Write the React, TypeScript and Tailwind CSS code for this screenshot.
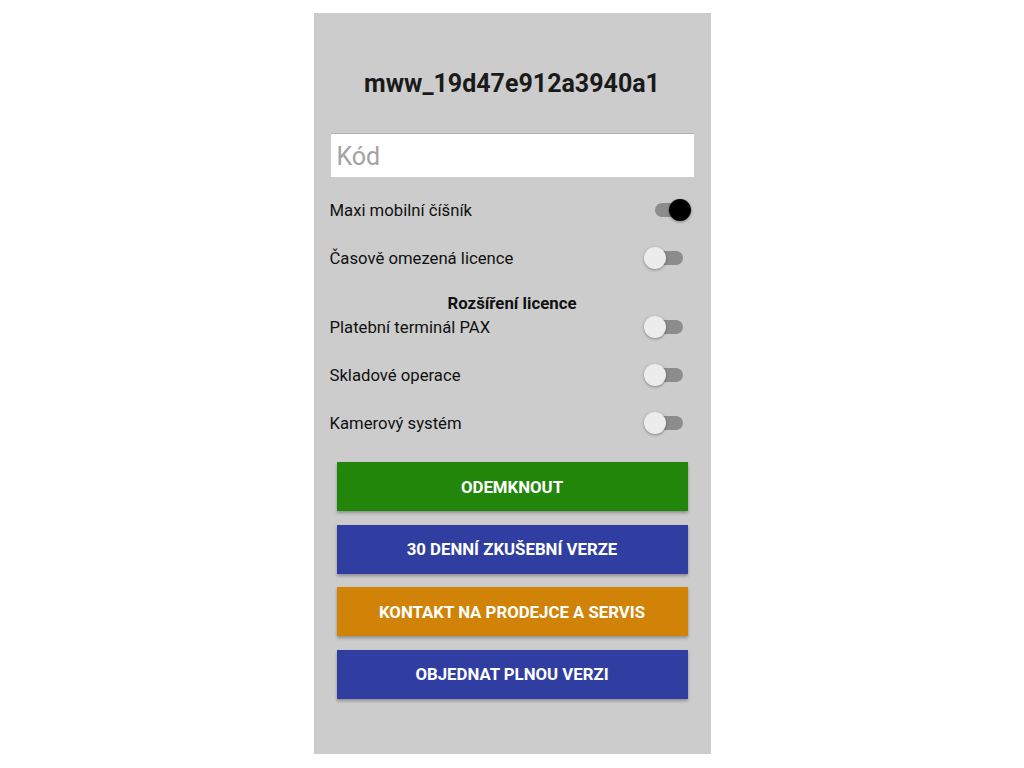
import React from "react";

const Toggle = ({ on }: { on?: boolean }) => (
  <div className="relative h-[22px] w-[48px] shrink-0">
    <div className="absolute left-[11px] right-[9px] top-[4px] h-[14px] rounded-full bg-[#8c8c8c]" />
    {on ? (
      <div className="absolute right-[1px] top-0 h-[22px] w-[22px] rounded-full bg-black shadow-[0_1px_3px_rgba(0,0,0,0.4)]" />
    ) : (
      <div className="absolute left-0 top-0 h-[22px] w-[22px] rounded-full bg-[#ececec] shadow-[0_1px_3px_rgba(0,0,0,0.35)]" />
    )}
  </div>
);

const Row = ({ label, on, h = "h-[48px]" }: { label: string; on?: boolean; h?: string }) => (
  <div className={`flex items-center justify-between pl-[16px] pr-[19px] ${h}`}>
    <span className="pt-[2px] text-[16.7px] text-[#111]">{label}</span>
    <Toggle on={on} />
  </div>
);

const Btn = ({ children, color }: { children: string; color: string }) => (
  <button
    className={`flex h-[49px] w-full items-center justify-center pt-[2px] text-[16.8px] font-bold uppercase text-white shadow-[0_2px_3px_rgba(0,0,0,0.3)] ${color}`}
  >
    {children}
  </button>
);

export default function App() {
  return (
    <div className="min-h-screen bg-white pt-[13px]" style={{ fontFamily: "Roboto, 'Liberation Sans', sans-serif" }}>
      <div className="mx-auto h-[741px] w-[397px] bg-[#cccccc] pt-[57px]">
        <h1 className="h-[28px] text-center text-[25px] font-bold leading-[28px] text-[#1a1a1a]">
          mww_19d47e912a3940a1
        </h1>

        <div className="mx-[17px] mt-[35px] flex h-[44px] items-center border-t border-[#b0b0b0] bg-white pl-[6px]">
          <span className="pt-[2px] text-[25px] text-[#a3a3a3]">Kód</span>
        </div>

        <div className="mt-[9px]">
          <Row label="Maxi mobilní číšník" on />
          <Row label="Časově omezená licence" />
          <div className="mt-[9px] h-[20px] pt-[2px] text-center text-[16.8px] font-bold leading-[20px] text-[#111]">
            Rozšíření licence
          </div>
          <Row label="Platební terminál PAX" h="h-[32px]" />
          <div className="mt-[8px]">
            <Row label="Skladové operace" />
            <Row label="Kamerový systém" />
          </div>
        </div>

        <div className="mt-[15px] flex flex-col gap-[13.5px] px-[23px]">
          <Btn color="bg-[#21860a]">Odemknout</Btn>
          <Btn color="bg-[#2f3ea0]">30 denní zkušební verze</Btn>
          <Btn color="bg-[#d08306]">Kontakt na prodejce a servis</Btn>
          <Btn color="bg-[#2f3ea0]">Objednat plnou verzi</Btn>
        </div>
      </div>
    </div>
  );
}
